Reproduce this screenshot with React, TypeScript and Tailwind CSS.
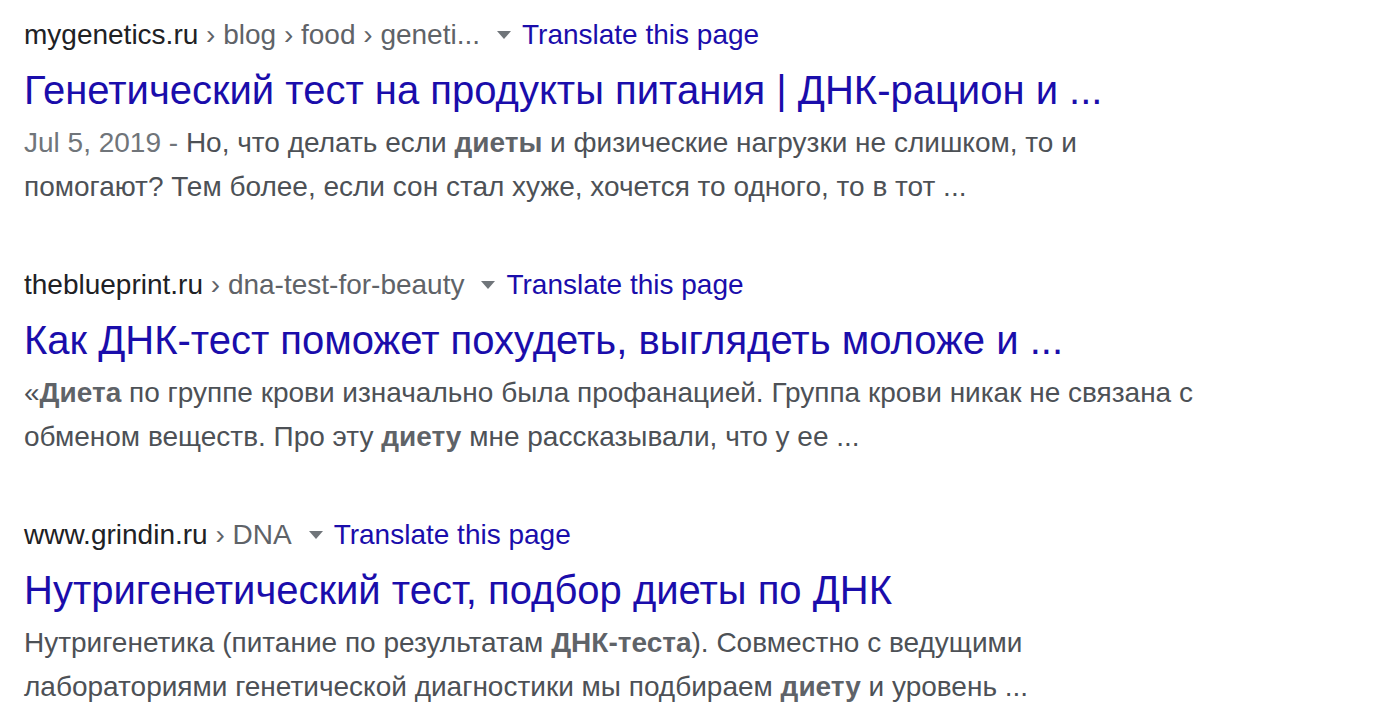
import React from "react";

function Arrow() {
  return (
    <svg width="14" height="8" viewBox="0 0 14 8" className="ml-[17px] mr-[11px] inline-block">
      <path d="M0 0 L14 0 L7 8 Z" fill="#70757a" />
    </svg>
  );
}

type R = {
  domain: string;
  path: string;
  title: string;
  lines: React.ReactNode[];
};

const B = ({ children }: { children: React.ReactNode }) => (
  <b className="font-bold text-[#5f6368]">{children}</b>
);

const results: R[] = [
  {
    domain: "mygenetics.ru",
    path: " › blog › food › geneti...",
    title: "Генетический тест на продукты питания | ДНК-рацион и ...",
    lines: [
      <>
        <span className="text-[#70757a]">Jul 5, 2019 - </span>Но, что делать если <B>диеты</B> и физические нагрузки не слишком, то и
      </>,
      <>помогают? Тем более, если сон стал хуже, хочется то одного, то в тот ...</>,
    ],
  },
  {
    domain: "theblueprint.ru",
    path: " › dna-test-for-beauty",
    title: "Как ДНК-тест поможет похудеть, выглядеть моложе и ...",
    lines: [
      <>
        «<B>Диета</B> по группе крови изначально была профанацией. Группа крови никак не связана с
      </>,
      <>
        обменом веществ. Про эту <B>диету</B> мне рассказывали, что у ее ...
      </>,
    ],
  },
  {
    domain: "www.grindin.ru",
    path: " › DNA",
    title: "Нутригенетический тест, подбор диеты по ДНК",
    lines: [
      <>
        Нутригенетика (питание по результатам <B>ДНК-теста</B>). Совместно с ведущими
      </>,
      <>
        лабораториями генетической диагностики мы подбираем <B>диету</B> и уровень ...
      </>,
    ],
  },
];

export default function App() {
  return (
    <div
      className="w-[1374px] h-[710px] bg-white overflow-hidden pl-[24px] pt-[13px] flex flex-col gap-[54px]"
      style={{ fontFamily: '"Liberation Sans", Arial, sans-serif' }}
    >
      {results.map((r, i) => (
        <div key={i} className="flex flex-col">
          <div className="h-[44px] flex items-center text-[28px] whitespace-pre">
            <span>
              <span className="text-[#202124]">{r.domain}</span>
              <span className="text-[#5f6368]">{r.path}</span>
            </span>
            <Arrow />
            <span className="text-[#1a0dab]">Translate this page</span>
          </div>
          <div className="mt-[7px] h-[52px] flex items-center text-[40px] text-[#1a0dab] whitespace-nowrap">
            {r.title}
          </div>
          <div className="mt-[5px] text-[28px] leading-[44px] text-[#4d5156] whitespace-nowrap">
            {r.lines.map((l, j) => (
              <div key={j}>{l}</div>
            ))}
          </div>
        </div>
      ))}
    </div>
  );
}
